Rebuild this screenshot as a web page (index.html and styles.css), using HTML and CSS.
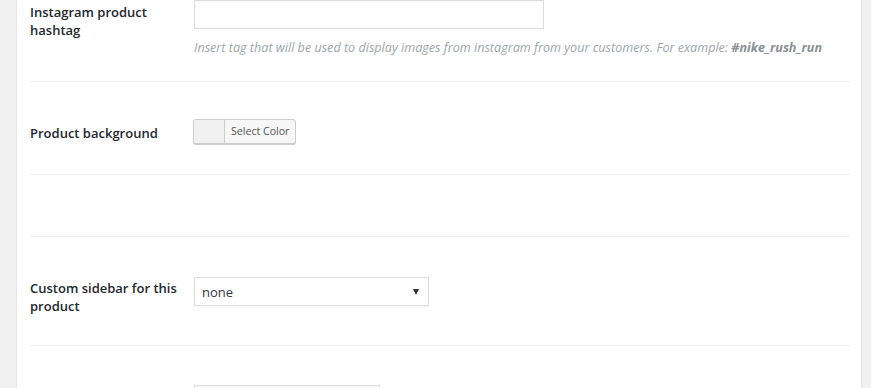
FILE: index.html
```html
<!DOCTYPE html>
<html lang="en">
<head>
    <meta charset="UTF-8">
    <meta name="viewport" content="width=device-width, initial-scale=1.0">
    <title>Product options</title>
    <link rel="stylesheet" href="styles.css">
</head>
<body>
    <div class="panel">
        <div class="row row-first">
            <div class="label">Instagram product hashtag</div>
            <div class="field">
                <input type="text" class="text-input">
                <p class="description">Insert tag that will be used to display images from instagram from your customers. For example: <strong>#nike_rush_run</strong></p>
            </div>
        </div>

        <div class="row row-color">
            <div class="label">Product background</div>
            <div class="field">
                <button class="color-btn"><span class="swatch"></span><span class="color-text">Select Color</span></button>
            </div>
        </div>

        <div class="row row-empty"></div>

        <div class="row row-select">
            <div class="label">Custom sidebar for this product</div>
            <div class="field">
                <div class="select">
                    <span>none</span>
                    <span class="arrow"></span>
                </div>
            </div>
        </div>

        <div class="row row-last">
            <div class="label"></div>
            <div class="field">
                <input type="text" class="text-input short">
            </div>
        </div>
    </div>
</body>
</html>
```

FILE: styles.css
```css
body {
    margin: 0;
    background-color: #f1f1f1;
    font-family: "Open Sans", "Noto Sans", sans-serif;
    color: #23282d;
    height: 388px;
    overflow: hidden;
}
.panel {
    margin-left: 16px;
    width: 846px;
    height: 388px;
    background-color: #fff;
    border-left: 1px solid #e5e5e5;
    border-right: 1px solid #e5e5e5;
    padding: 0 11px 0 13px;
    box-sizing: border-box;
    overflow: hidden;
}
.row {
    display: flex;
    border-bottom: 1px solid #eee;
}
.label {
    width: 164px;
    flex-shrink: 0;
    font-size: 13px;
    font-weight: 600;
    line-height: 18px;
    padding-right: 8px;
    box-sizing: border-box;
}
.field {
    flex: 1;
}
.row-first {
    height: 82px;
    box-sizing: border-box;
}
.row-first .label {
    margin-top: 3px;
}
.text-input {
    display: block;
    width: 350px;
    height: 29px;
    margin: 0;
    border: 1px solid #ddd;
    box-shadow: inset 0 1px 2px rgba(0, 0, 0, 0.04);
    box-sizing: border-box;
}
.text-input.short {
    width: 186px;
}
.description {
    margin: 11px 0 0;
    font-size: 12.6px;
    font-style: italic;
    color: #a0a5aa;
    line-height: 16px;
}
.description strong {
    color: #8c8f94;
    font-weight: 700;
}
.row-color {
    height: 93px;
    padding-top: 37px;
    box-sizing: border-box;
}
.row-color .label {
    margin-top: 5px;
}
.color-btn {
    display: flex;
    height: 25px;
    margin: 0 0 0 -1px;
    padding: 0;
    border: 1px solid #ccc;
    border-radius: 3px;
    background-color: #f7f7f7;
    box-shadow: 0 1px 0 #ccc;
    overflow: hidden;
    font-family: inherit;
    cursor: pointer;
}
.swatch {
    width: 30px;
    height: 100%;
    border-right: 1px solid #ccc;
    background-color: #f1f1f1;
}
.color-text {
    padding: 0 6px 0 6px;
    font-size: 10.6px;
    line-height: 22px;
    color: #555;
}
.row-empty {
    height: 61px;
}
.row-select {
    height: 109px;
    padding-top: 40px;
    box-sizing: border-box;
}
.row-select .label {
    margin-top: 2px;
}
.select {
    display: flex;
    align-items: center;
    justify-content: space-between;
    width: 235px;
    height: 29px;
    padding: 0 9px 0 7px;
    border: 1px solid #ddd;
    box-shadow: 0 1px 2px rgba(0, 0, 0, 0.05);
    box-sizing: border-box;
    font-size: 13px;
    color: #32373c;
}
.arrow {
    width: 0;
    height: 0;
    border-left: 3px solid transparent;
    border-right: 3px solid transparent;
    border-top: 6px solid #333;
}
.row-last {
    border-bottom: none;
    padding-top: 39px;
}
```
